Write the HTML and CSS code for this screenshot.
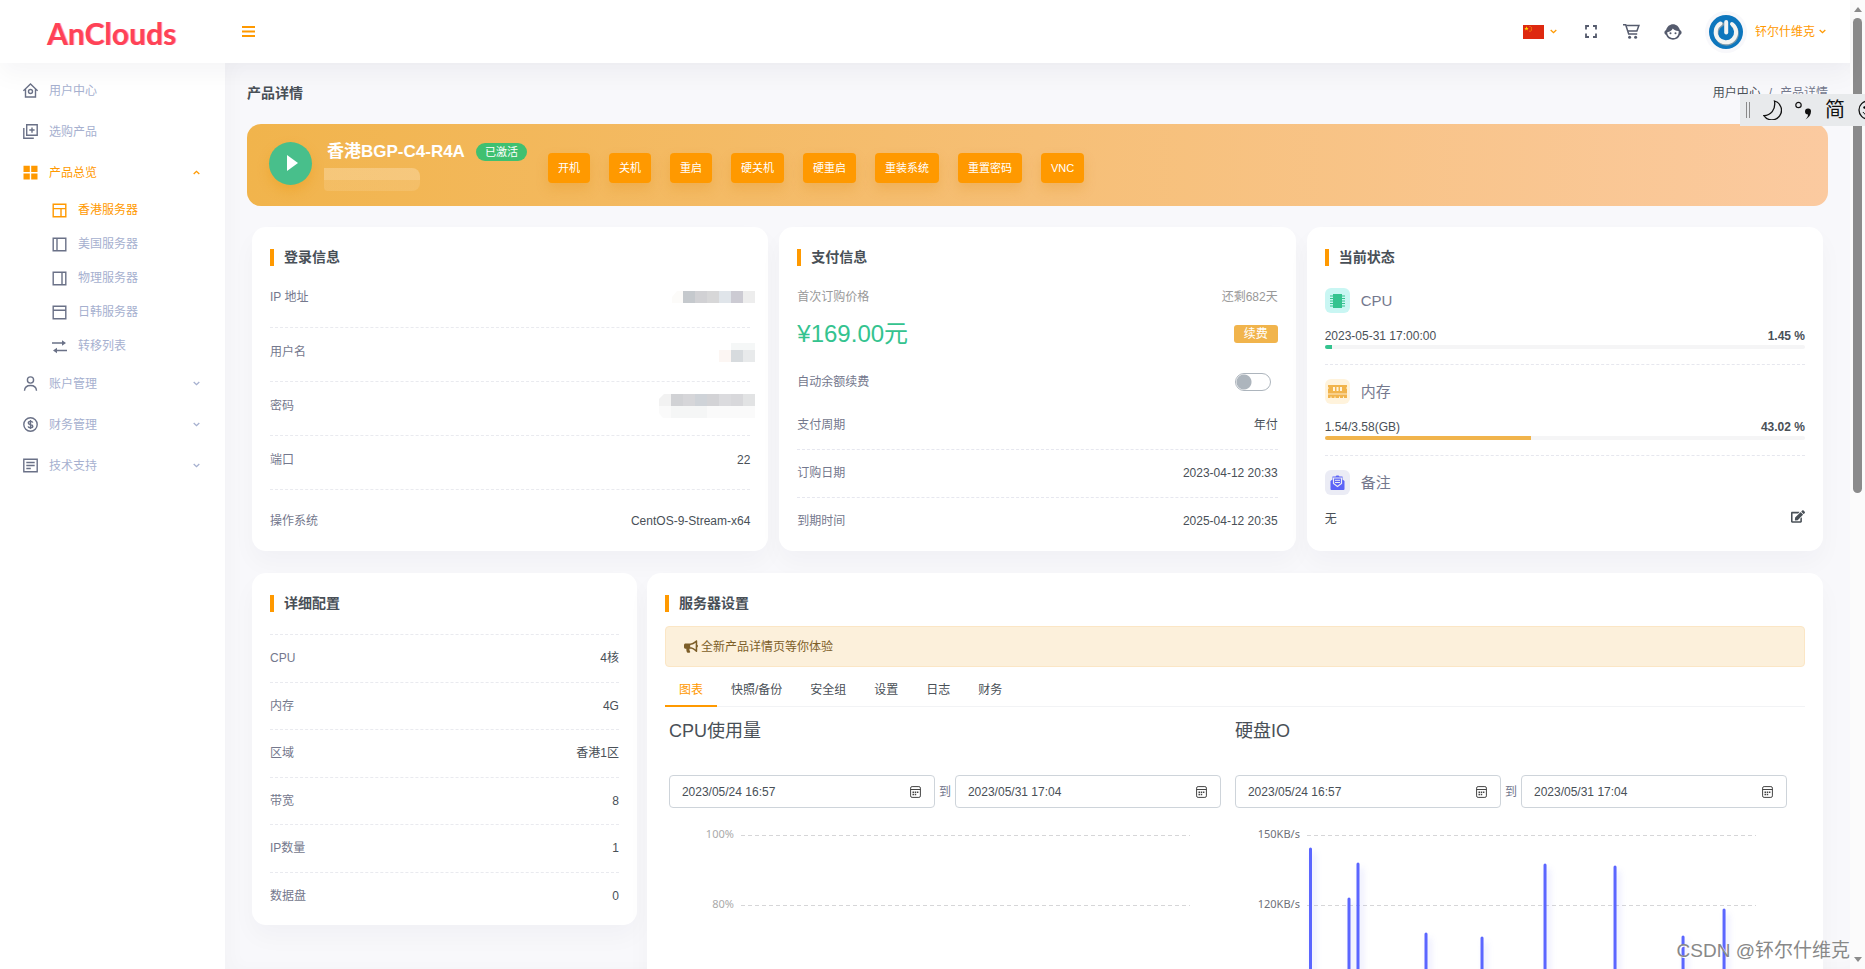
FILE: index.html
```html
<!DOCTYPE html>
<html lang="zh-CN">
<head>
<meta charset="utf-8">
<meta name="viewport" content="width=device-width, initial-scale=1">
<title>产品详情 - AnClouds</title>
<link rel="stylesheet" href="styles.css">
</head>
<body>
<div class="window">
<div class="app">
  <header class="topbar">
    <a class="logo" href="#">AnClouds</a>
    <button class="menu-toggle" type="button" aria-label="菜单"><svg width="13" height="11" viewBox="0 0 13 11"><path d="M0 0h13v2H0zM0 4.500h13v2H0zM0 9h13v2H0z" fill="currentColor"/></svg></button>
    <div class="topbar-tools">
      <button class="tool lang" type="button" aria-label="语言">
        <svg width="21" height="14" viewBox="0 0 21 14"><path fill="#de2910" d="M0 0h21v14H0z"/><path fill="#ffde00" d="M3.500 1.300l.6 1.600h1.600L4.400 4l.5 1.600-1.400-1-1.400 1L2.600 4 1.300 2.900h1.600z"/><g fill="#f5a012"><circle cx="7" cy="1.500" r=".6"/><circle cx="8.400" cy="2.900" r=".6"/><circle cx="8.400" cy="4.900" r=".6"/><circle cx="7" cy="6.200" r=".6"/></g></svg>
        <svg class="chev" width="7" height="5" viewBox="0 0 7 5"><path d="M.7 1l2.800 2.700L6.300 1"/></svg>
      </button>
      <button class="tool" type="button" aria-label="全屏"><svg width="12" height="13" viewBox="0 0 12 13"><path d="M1 4.500V1h3M8 1h3v3.500M11 8.500V12H8M4 12H1V8.500" fill="none" stroke="currentColor" stroke-width="1.800"/></svg></button>
      <button class="tool cart" type="button" aria-label="购物车"><svg width="17" height="17" viewBox="0 0 17 17"><path d="M0 1.800h2.700l3 9.200h8.500" fill="none" stroke="currentColor" stroke-width="1.500"/><path d="M3.300 2.500h12.600l-2 5.500H5" fill="none" stroke="currentColor" stroke-width="1.500"/><circle cx="6.600" cy="14.300" r="1.500" fill="currentColor"/><circle cx="12.600" cy="14.300" r="1.500" fill="currentColor"/></svg></button>
      <button class="tool face" type="button" aria-label="客服"><svg width="18" height="16" viewBox="0 0 18 16"><path d="M2.100 6C3 2.600 5.700.3 9 .3s6 2.300 6.900 5.700c1 .4 1.700 1.300 1.700 2.500s-.7 2.100-1.700 2.500C15 13.900 12.200 15.700 9 15.700S3 13.900 2.100 11C1.100 10.600.4 9.700.4 8.500S1.100 6.400 2.100 6z" fill="currentColor"/><path d="M3.200 8.300c2.600-.5 4.600-1.900 5.600-3.900 1.300 1.700 3.200 2.600 5.800 2.500.1 1 .1 2.200-.2 3-.8 2.500-2.800 4.200-5.400 4.200-3.100 0-5.800-2.500-5.800-5.800z" fill="#fff"/><circle cx="6.500" cy="9.200" r="1" fill="currentColor"/><circle cx="11.500" cy="9.200" r="1" fill="currentColor"/></svg></button>
      <button class="account" type="button">
        <span class="avatar"><svg width="34" height="34" viewBox="0 0 34 34"><circle cx="17" cy="17" r="17" fill="#0d76bd"/><path d="M12.200 8.300a10.200 10.200 0 1 0 11 1.400" fill="none" stroke="#7d99a9" stroke-width="4" stroke-linecap="round" transform="translate(1 1)"/><path d="M11.500 8.500a10.200 10.200 0 1 0 11.500.5" fill="none" stroke="#f3f4f2" stroke-width="4" stroke-linecap="round"/><path d="M17.200 7v10.500" stroke="#f3f4f2" stroke-width="4" stroke-linecap="round"/></svg></span>
        <span>钚尔什维克</span>
        <svg class="chev" width="7" height="5" viewBox="0 0 7 5"><path d="M.7 1l2.800 2.700L6.300 1"/></svg>
      </button>
    </div>
  </header>

  <div class="body">
    <nav class="sidebar" aria-label="主菜单">
      <a class="nav-item" href="#"><svg class="ico" viewBox="0 0 15 15"><path d="M2.500 6v8h10V6M.4 7.800L7.500 1l7.100 6.800"/><circle cx="7.500" cy="8.500" r="2"/></svg><span>用户中心</span></a>
      <a class="nav-item" href="#"><svg class="ico" viewBox="0 0 15 15"><path d="M3.700.8h10.500v10.500H3.700zM.8 4v10.200h10M9 3.400v5.300M6.300 6h5.300"/></svg><span>选购产品</span></a>
      <a class="nav-item active" href="#"><svg class="ico" viewBox="0 0 15 15"><path class="solid" d="M.5.800h6.300v6.200H.5zM8.200.800h6.300v6.200H8.200zM.5 8.400h6.300v6.200H.5zM8.200 8.400h6.300v6.200H8.200z"/></svg><span>产品总览</span><svg class="chev" width="7" height="5" viewBox="0 0 7 5"><path d="M.7 4l2.800-2.700L6.300 4"/></svg></a>
      <div class="subnav">
        <a class="nav-sub active" href="#"><svg class="ico" viewBox="0 0 15 15"><path d="M1.200 1.200h12.600v12.600H1.200zM1.200 5.600h12.600M9 5.600v8.200"/></svg><span>香港服务器</span></a>
        <a class="nav-sub" href="#"><svg class="ico" viewBox="0 0 15 15"><path d="M1.200 1.200h12.600v12.600H1.200zM5 1.200v12.600"/></svg><span>美国服务器</span></a>
        <a class="nav-sub" href="#"><svg class="ico" viewBox="0 0 15 15"><path d="M1.200 1.200h12.600v12.600H1.200zM10 1.200v12.600"/></svg><span>物理服务器</span></a>
        <a class="nav-sub" href="#"><svg class="ico" viewBox="0 0 15 15"><path d="M1.200 1.200h12.600v12.600H1.200zM1.200 5.200h12.600"/></svg><span>日韩服务器</span></a>
        <a class="nav-sub" href="#"><svg class="ico" viewBox="0 0 15 15"><path d="M0 4h11.500M15 11.500H3.500"/><path class="solid" d="M10 1.200l4 2.800-4 2.800zM5 8.700l-4 2.800 4 2.800z"/></svg><span>转移列表</span></a>
      </div>
      <a class="nav-item" href="#"><svg class="ico" viewBox="0 0 15 15"><circle cx="7.500" cy="4" r="3.100"/><path d="M1.500 14.800c.2-3.600 2.700-5.300 6-5.300s5.800 1.700 6 5.300"/></svg><span>账户管理</span><svg class="chev" width="7" height="5" viewBox="0 0 7 5"><path d="M.7 1l2.800 2.700L6.300 1"/></svg></a>
      <a class="nav-item" href="#"><svg class="ico" viewBox="0 0 15 15"><circle cx="7.500" cy="7.500" r="6.700"/><path d="M9.800 5.600c-.2-.8-1-1.200-2.300-1.200S5.300 5 5.300 5.900s.7 1.300 2.200 1.600 2.300.7 2.300 1.700-.9 1.500-2.300 1.500-2.200-.5-2.400-1.400M7.500 3v9"/></svg><span>财务管理</span><svg class="chev" width="7" height="5" viewBox="0 0 7 5"><path d="M.7 1l2.800 2.700L6.300 1"/></svg></a>
      <a class="nav-item" href="#"><svg class="ico" viewBox="0 0 15 15"><path d="M.8 1.300h13.400v12.400H.8zM3.300 4.500h8.400M3.300 7.500h8.400M3.300 10.500h4.500"/></svg><span>技术支持</span><svg class="chev" width="7" height="5" viewBox="0 0 7 5"><path d="M.7 1l2.800 2.700L6.300 1"/></svg></a>
    </nav>

    <main class="main">
      <div class="page-head">
        <h1 class="page-title">产品详情</h1>
        <nav class="crumbs" aria-label="位置"><a href="#">用户中心</a><span>/</span><span>产品详情</span></nav>
      </div>

      <section class="banner">
        <span class="play"><svg width="11" height="16" viewBox="0 0 11 16"><path d="M0 0l11 8-11 8z" fill="#fff"/></svg></span>
        <div class="product">
          <div class="product-name"><h2>香港BGP-C4-R4A</h2><span class="badge">已激活</span></div>
          <div class="product-mask"></div>
        </div>
        <div class="actions">
          <button class="btn" type="button">开机</button>
          <button class="btn" type="button">关机</button>
          <button class="btn" type="button">重启</button>
          <button class="btn" type="button">硬关机</button>
          <button class="btn" type="button">硬重启</button>
          <button class="btn" type="button">重装系统</button>
          <button class="btn" type="button">重置密码</button>
          <button class="btn" type="button">VNC</button>
        </div>
      </section>

      <div class="cards-top">
        <section class="card">
          <h3 class="card-title">登录信息</h3>
          <dl class="login">
            <div><dt>IP 地址</dt><dd class="masked"><svg width="83" height="12" viewBox="0 0 83 12"><path fill="#fcfbf9" d="M5 0h6v12H0V6z"/><path fill="#c5c9cd" d="M11 0h12v12H11z"/><path fill="#d1d1d4" d="M23 0h12v12H23z"/><path fill="#d7d7d8" d="M35 0h12v12H35z"/><path fill="#e0e5ea" d="M47 0h12v12H47z"/><path fill="#cccbd3" d="M59 0h12v12H59z"/><path fill="#ededed" d="M71 0h12v12H71z"/></svg></dd></div>
            <div><dt>用户名</dt><dd class="masked"><svg width="36" height="19" viewBox="0 0 36 19"><path fill="#f5f7f7" d="M12 0h24v7H12z"/><path fill="#fcf6f3" d="M0 7h12v12H0z"/><path fill="#d7dbde" d="M12 7h12v12H12z"/><path fill="#e8eaeb" d="M24 7h12v12H24z"/></svg></dd></div>
            <div><dt>密码</dt><dd class="masked"><svg width="96" height="24" viewBox="0 0 96 24"><path fill="#f2f2f2" d="M5 0h7v12H0V5z"/><path fill="#d1d2d5" d="M12 0h12v12H12z"/><path fill="#d6d6d9" d="M24 0h12v12H24z"/><path fill="#cfd3d8" d="M36 0h12v12H36z"/><path fill="#d3d3d6" d="M48 0h12v12H48z"/><path fill="#dbdbde" d="M60 0h12v12H60z"/><path fill="#d8d8db" d="M72 0h12v12H72z"/><path fill="#e2e3e4" d="M84 0h12v12H84z"/><path fill="#fafafa" d="M0 12h96v12H4l-4-5z"/><path fill="#f5f6f6" d="M12 12h36v12H12z"/></svg></dd></div>
            <div><dt>端口</dt><dd>22</dd></div>
            <div><dt>操作系统</dt><dd>CentOS-9-Stream-x64</dd></div>
          </dl>
        </section>

        <section class="card">
          <h3 class="card-title">支付信息</h3>
          <div class="line muted"><span>首次订购价格</span><span>还剩682天</span></div>
          <div class="line price-line"><strong class="price">¥169.00元</strong><button class="renew" type="button">续费</button></div>
          <div class="line auto-line"><label for="auto">自动余额续费</label><input class="switch" id="auto" type="checkbox"></div>
          <dl class="pay">
            <div><dt>支付周期</dt><dd>年付</dd></div>
            <div><dt>订购日期</dt><dd>2023-04-12 20:33</dd></div>
            <div><dt>到期时间</dt><dd>2025-04-12 20:35</dd></div>
          </dl>
        </section>

        <section class="card">
          <h3 class="card-title">当前状态</h3>
          <div class="stat">
            <div class="stat-head"><span class="stat-ico green"><svg width="15" height="16" viewBox="0 0 15 16"><path d="M3 1h9v14H3z" fill="#34c38f"/><path d="M0 3h15M0 5.500h15M0 8h15M0 10.500h15M0 13h15" stroke="#34c38f" stroke-width="1"/><path d="M3 1h9v14H3z" fill="#34c38f"/></svg></span>CPU</div>
            <div class="stat-row"><span>2023-05-31 17:00:00</span><b>1.45 %</b></div>
            <div class="bar"><div class="fill green-fill" style="width:1.45%"></div></div>
          </div>
          <div class="stat">
            <div class="stat-head"><span class="stat-ico amber"><svg width="19" height="13" viewBox="0 0 19 13"><path d="M0 0h19v2l-1 1 1 1v4H0V4l1-1-1-1z" fill="#f1b44c"/><path d="M0 8h19v2H0z" fill="#f8cf8a"/><path d="M0 10h19v3H0z" fill="#f1b44c"/><path d="M5 2h2v4H5zM8.500 2h2v4h-2zM12 2h2v4h-2zM2.500 11.500h1V13h-1zM6.500 11.500h1V13h-1zM11 11.500h1V13h-1zM15 11.500h1V13h-1z" fill="#fff3dc"/></svg></span>内存</div>
            <div class="stat-row"><span>1.54/3.58(GB)</span><b>43.02 %</b></div>
            <div class="bar"><div class="fill amber-fill" style="width:43.02%"></div></div>
          </div>
          <div class="stat">
            <div class="stat-head"><span class="stat-ico violet"><svg width="15" height="15" viewBox="0 0 15 15"><path d="M2.500 1.500h3l1-1h2l1 1h3v3L14.500 6v8a1 1 0 0 1-1 1h-12a1 1 0 0 1-1-1V6l2-1.500z" fill="#5b63f7"/><path d="M3.500 3h8v5.500l-4 3-4-3z" fill="#5b63f7" stroke="#ebecf5" stroke-width="1.200"/><path d="M5 5.300h5M5 7.500h5" stroke="#ebecf5"/></svg></span>备注</div>
            <div class="stat-row note"><span>无</span><button class="edit" type="button" aria-label="编辑备注"><svg width="14" height="13" viewBox="0 0 576 512"><path fill="currentColor" d="M402.600 83.200l90.200 90.200c3.800 3.800 3.800 10 0 13.800L274.400 405.600l-92.800 10.300c-12.400 1.400-22.900-9.100-21.500-21.500l10.300-92.800L388.800 83.200c3.800-3.800 10-3.800 13.800 0zm162-22.900l-48.800-48.800c-15.200-15.200-39.900-15.200-55.200 0l-35.400 35.400c-3.800 3.800-3.800 10 0 13.800l90.200 90.200c3.800 3.800 10 3.800 13.800 0l35.400-35.400c15.200-15.300 15.200-40 0-55.200zM384 346.200V448H64V128h229.800c3.200 0 6.200-1.300 8.500-3.500l40-40c7.600-7.600 2.200-20.500-8.500-20.500H48C21.500 64 0 85.500 0 112v352c0 26.500 21.500 48 48 48h352c26.500 0 48-21.500 48-48V306.200c0-10.700-12.900-16-20.500-8.500l-40 40c-2.200 2.300-3.500 5.300-3.500 8.500z"/></svg></button></div>
          </div>
        </section>
      </div>

      <div class="cards-bottom">
        <section class="card specs-card">
          <h3 class="card-title">详细配置</h3>
          <dl class="specs">
            <div><dt>CPU</dt><dd>4核</dd></div>
            <div><dt>内存</dt><dd>4G</dd></div>
            <div><dt>区域</dt><dd>香港1区</dd></div>
            <div><dt>带宽</dt><dd>8</dd></div>
            <div><dt>IP数量</dt><dd>1</dd></div>
            <div><dt>数据盘</dt><dd>0</dd></div>
          </dl>
        </section>

        <section class="card settings-card">
          <h3 class="card-title tight">服务器设置</h3>
          <div class="notice"><svg width="14" height="13" viewBox="0 0 576 512"><path fill="currentColor" d="M576 240c0-23.630-12.950-44.040-32-55.120V32.010C544 23.260 537.020 0 512 0c-7.120 0-14.190 2.380-19.980 7.020l-85.030 68.030C364.280 109.190 310.660 128 256 128H64c-35.350 0-64 28.650-64 64v96c0 35.350 28.650 64 64 64h33.700c-1.390 10.480-2.180 21.140-2.180 32 0 39.770 9.260 77.350 25.560 110.940 5.190 10.690 16.520 17.060 28.400 17.060h74.280c26.050 0 41.690-29.840 25.900-50.560-16.400-21.520-26.150-48.360-26.150-77.440 0-11.110 1.620-21.790 4.410-32H256c54.660 0 108.280 18.810 150.980 52.950l85.030 68.030a32.023 32.023 0 0 0 19.980 7.020c24.920 0 32-22.780 32-32V295.130C563.050 284.040 576 263.630 576 240zm-96 141.420l-33.050-26.440C392.950 311.780 325.120 288 256 288v-96c69.120 0 136.950-23.780 190.950-66.980L480 98.580v282.840z"/></svg><span>全新产品详情页等你体验</span></div>
          <nav class="tabs" aria-label="服务器设置">
            <a class="tab on" href="#">图表</a><a class="tab" href="#">快照/备份</a><a class="tab" href="#">安全组</a><a class="tab" href="#">设置</a><a class="tab" href="#">日志</a><a class="tab" href="#">财务</a>
          </nav>
          <div class="charts">
            <section>
              <h4 class="chart-title">CPU使用量</h4>
              <div class="range">
                <div class="date"><input type="text" value="2023/05/24 16:57" aria-label="CPU使用量开始时间"><svg width="11" height="12" viewBox="0 0 11 12"><rect x=".6" y=".6" width="9.800" height="10.800" rx="1.500"/><path d="M.6 3.500h9.800"/><path class="days" d="M2.500 6.300h6M2.500 8.500h4"/></svg></div>
                <span>到</span>
                <div class="date"><input type="text" value="2023/05/31 17:04" aria-label="CPU使用量结束时间"><svg width="11" height="12" viewBox="0 0 11 12"><rect x=".6" y=".6" width="9.800" height="10.800" rx="1.500"/><path d="M.6 3.500h9.800"/><path class="days" d="M2.500 6.300h6M2.500 8.500h4"/></svg></div>
              </div>
              <div class="plot light">
                <div class="tick"><span>100%</span></div>
                <div class="tick"><span>80%</span></div>
              </div>
            </section>
            <section>
              <h4 class="chart-title">硬盘IO</h4>
              <div class="range">
                <div class="date"><input type="text" value="2023/05/24 16:57" aria-label="硬盘IO开始时间"><svg width="11" height="12" viewBox="0 0 11 12"><rect x=".6" y=".6" width="9.800" height="10.800" rx="1.500"/><path d="M.6 3.500h9.800"/><path class="days" d="M2.500 6.300h6M2.500 8.500h4"/></svg></div>
                <span>到</span>
                <div class="date"><input type="text" value="2023/05/31 17:04" aria-label="硬盘IO结束时间"><svg width="11" height="12" viewBox="0 0 11 12"><rect x=".6" y=".6" width="9.800" height="10.800" rx="1.500"/><path d="M.6 3.500h9.800"/><path class="days" d="M2.500 6.300h6M2.500 8.500h4"/></svg></div>
              </div>
              <div class="plot">
                <div class="tick"><span>150KB/s</span></div>
                <div class="tick"><span>120KB/s</span></div>
                <svg class="series" viewBox="0 0 449 350" preserveAspectRatio="none"><path d="M3.500 350V14M42 350V64M51 350V29M119 350V99M175 350V103M238 350V30M308 350V32M376 350V102M417 350V75"/></svg>
              </div>
            </section>
          </div>
        </section>
      </div>
    </main>
  </div>
</div>

<div class="scrollbar" aria-hidden="true"><i class="up"></i><i class="thumb"></i><i class="down"></i></div>

<div class="ime">
  <svg width="4" height="16" viewBox="0 0 4 16"><path d="M.5 0v16M3.500 0v16" stroke="#8a8a8a" fill="none"/></svg>
  <svg width="19" height="20" viewBox="0 0 19 20"><path d="M11.500 1a9.600 9.600 0 1 1-10.600 14.600C7.500 15.500 13 10 11.500 1z" fill="none" stroke="#111" stroke-width="1.300"/></svg>
  <svg width="17" height="20" viewBox="0 0 17 20"><circle cx="3.500" cy="5" r="2.700" fill="none" stroke="#111" stroke-width="1.200"/><path d="M13 8.500a2.900 2.900 0 0 1 3 3c0 3-2 6-5.500 8 1.500-1.600 2.500-3 2.500-5a2.900 2.900 0 0 1 0-6z" fill="#111"/></svg>
  <span>简</span>
  <svg width="20" height="20" viewBox="0 0 20 20"><circle cx="10" cy="10" r="9" fill="none" stroke="#111" stroke-width="1.300"/><circle cx="6.500" cy="7.500" r="1.200"/><circle cx="13.500" cy="7.500" r="1.200"/><path d="M5 12c2 4 8 4 10 0" fill="none" stroke="#111"/></svg>
</div>
<div class="watermark">CSDN @钚尔什维克</div>
</div>
</body>
</html>
```
FILE: styles.css
```css
* { box-sizing: border-box; }

body {
  margin: 0;
  background: #f8f8fb;
  color: #495057;
  font: 12px/18px "Liberation Sans", "Noto Sans CJK SC", sans-serif;
}

h1, h2, h3, h4, dl, dd { margin: 0; }
a { color: inherit; text-decoration: none; }
button { border: 0; padding: 0; background: none; color: inherit; font: inherit; cursor: pointer; }
svg { display: block; flex: none; }

.window { position: relative; display: flex; height: 100vh; overflow: hidden; }
.app { flex: 1; min-width: 0; display: flex; flex-direction: column; }

/* Top bar */
.topbar {
  position: relative;
  z-index: 2;
  display: flex;
  flex: none;
  align-items: center;
  height: 63px;
  padding-right: 24px;
  background: #fff;
  box-shadow: 0 12px 24px rgba(18, 38, 63, .04);
}
.logo {
  width: 242px;
  padding: 2px 0 0 47px;
  color: #ff4257;
  font: 700 30px/34px Lato, sans-serif;
  text-shadow: 1px 0 #fca5ae;
}
.menu-toggle { color: #ff9900; }
.topbar-tools { display: flex; align-items: center; margin-left: auto; color: #555b6d; }
.tool { margin-right: 26px; }
.tool.cart { margin-right: 24px; }
.tool.face { margin-right: 23px; }
.lang { display: flex; align-items: center; gap: 6px; margin-right: 28px; color: #ff9900; }
.chev path { fill: none; stroke: currentColor; stroke-width: 1.300; }
.account { display: flex; align-items: center; color: #ff9900; }
.avatar { margin-right: 8px; padding: 4px; border-radius: 50%; background: #f8f8fb; }
.account .chev { margin-left: 4px; }

/* Columns */
.body { display: flex; flex: 1; min-height: 0; }
.sidebar { flex: none; width: 225px; padding-top: 7px; background: #fff; color: #a6b0cf; }
.nav-item { display: flex; align-items: center; height: 41px; padding: 0 25px 0 23px; }
.nav-sub { display: flex; align-items: center; height: 34px; padding-left: 52px; }
.ico { width: 15px; height: 15px; margin-right: 11px; fill: none; stroke: #6a7187; stroke-width: 1.400; }
.ico .solid { fill: #6a7187; stroke: none; }
.nav-item .chev { margin-left: auto; }
.active { color: #ff9900; }
.active .ico { stroke: #ff9900; }
.active .ico .solid { fill: #ff9900; }

.main { flex: 1; min-width: 0; padding: 21px 22px 0; overflow: hidden; background: #f8f8fb; box-shadow: inset 8px 0 16px rgba(18, 38, 63, .02); }
.page-head { display: flex; align-items: center; justify-content: space-between; }
.page-title { font-size: 14px; line-height: 18px; }
.crumbs { display: flex; gap: 8px; color: #74788d; }
.crumbs a { color: #495057; }

/* Product banner */
.banner {
  display: flex;
  align-items: center;
  height: 82px;
  margin-top: 22px;
  padding: 0 22px;
  border-radius: 14px;
  background: linear-gradient(to right, #f1b44c, #fbcaa0);
}
.play {
  display: flex;
  align-items: center;
  justify-content: center;
  width: 43px;
  height: 43px;
  margin: 0 12px 4px 0;
  padding-left: 3px;
  border-radius: 50%;
  background: #48bf8b;
  box-shadow: 0 6px 12px rgba(236, 153, 20, .4);
}
.product { width: 224px; }
.product-name { display: flex; align-items: center; gap: 11px; padding-left: 3px; }
.product-name h2 { color: #fff; font-size: 17px; line-height: 26px; white-space: nowrap; }
.badge { padding: 0 9px; border-radius: 9px; background: #40c070; color: #fff; font-size: 11px; line-height: 18px; white-space: nowrap; }
.product-mask {
  width: 96px;
  height: 23px;
  margin-top: 3px;
  border-radius: 0 8px 8px 4px;
  background: linear-gradient(to bottom, rgba(255, 240, 220, .3) 12px, rgba(255, 240, 220, .14) 12px);
}
.actions { display: flex; flex-wrap: wrap; gap: 19px; padding-top: 6px; }
.btn {
  height: 30px;
  padding: 0 10px;
  border-radius: 4px;
  background: #ff9900;
  box-shadow: 0 6px 12px rgba(226, 140, 20, .25);
  color: #fff;
  font-size: 11px;
}

/* Cards */
.cards-top { display: grid; grid-template-columns: repeat(3, 1fr); gap: 11px; margin: 21px 5px 22px; }
.cards-bottom { display: flex; align-items: flex-start; gap: 10px; margin: 0 5px; }
.card { padding: 22px 18px 13px; border-radius: 14px; background: #fff; box-shadow: 0 12px 24px rgba(18, 38, 63, .03); }
.specs-card { flex: none; width: 24.500%; padding-bottom: 6px; }
.settings-card { flex: 1; min-width: 0; }
.card-title { margin-bottom: 22px; padding-left: 10px; border-left: 4px solid #ff9900; font-size: 14px; line-height: 17px; }
.card-title.tight { margin-bottom: 14px; }

dl > div { display: flex; justify-content: space-between; }
dt, .auto-line { color: #74788d; }
.login > div { height: 54px; padding-top: 15px; border-bottom: 1px dashed #e9eaef; }
.login > div:first-child { height: 40px; padding-top: 0; }
.login > div:last-child { height: 48px; padding-top: 22px; border: 0; }
.masked { display: flex; align-items: center; height: 18px; margin-right: -5px; }

.line { display: flex; align-items: center; justify-content: space-between; }
.muted { color: #999; }
.price-line { height: 30px; margin: 13px 0 24px; }
.price { color: #34c38f; font-size: 24px; font-weight: 400; }
.renew { padding: 0 10px; border-radius: 3px; background: #f1b44c; color: #fff; }
.switch {
  appearance: none;
  width: 36px;
  height: 18px;
  margin: 0 7px 0 0;
  border: 1px solid #adb5bd;
  border-radius: 9px;
  background: radial-gradient(circle at 8px 8px, #adb5bd 7px, transparent 8px);
}
.pay { margin-top: 11px; }
.pay > div { padding: 14px 0 15px; border-bottom: 1px dashed #e6e7ef; }
.pay > div:last-child { padding-bottom: 0; border: 0; }

.stat { margin-bottom: 14px; padding-bottom: 15px; border-bottom: 1px dashed #e6e7ee; }
.stat:last-child { margin: 0; padding: 0; border: 0; }
.stat-head { display: flex; align-items: center; gap: 11px; height: 25px; color: #74788d; font-size: 15px; }
.stat-ico { display: flex; align-items: center; justify-content: center; width: 25px; height: 25px; border-radius: 6px; }
.green { background: #c9f6f3; }
.amber { background: #fff3dc; }
.violet { background: #ebecf5; }
.stat-row { display: flex; align-items: center; justify-content: space-between; margin-top: 14px; }
.stat-row.note { align-items: flex-start; margin-top: 15px; }
.bar { height: 4px; border-radius: 2px; overflow: hidden; background: #f5f5f6; }
.fill { height: 100%; }
.green-fill { background: #34c38f; }
.amber-fill { background: #f1b44c; }

.specs { display: grid; grid-auto-rows: 1fr; min-height: 285px; }
.specs > div { align-items: center; border-top: 1px dashed #e9eaef; }

/* Server settings */
.notice { display: flex; align-items: center; gap: 3px; height: 41px; padding: 0 18px; border: 1px solid #fbe6c5; border-radius: 4px; background: #fcf0db; color: #7d5e28; }
.tabs { display: flex; border-bottom: 1px solid #f2f3f5; }
.tab { margin-bottom: -1px; padding: 14px 14px 6px; border-bottom: 2px solid transparent; }
.tab.on { border-color: #ff9900; color: #ff9900; }
.charts { display: grid; grid-template-columns: 1fr 1fr; gap: 14px; padding: 12px 18px 0 4px; }
.chart-title { margin-bottom: 32px; font-size: 18px; font-weight: 400; line-height: 24px; }
.range { display: flex; align-items: center; gap: 4px; color: #74788d; }
.date { display: flex; flex: 1; align-items: center; min-width: 0; height: 33px; padding: 0 13px 0 12px; border: 1px solid #ced4da; border-radius: 4px; background: #fff; }
.date input { flex: 1; min-width: 0; padding: 0; border: 0; outline: 0; background: none; color: #495057; font: inherit; }
.date svg { fill: none; stroke: #444; stroke-width: 1; }
.date .days { stroke-width: 1.500; stroke-dasharray: 1.500 .7; }
.plot { position: relative; height: 350px; margin: 27px 31px 0 0; color: #6e7079; }
.plot.light { color: #aaa; }
.tick { display: flex; align-items: flex-start; gap: 7px; height: 70px; }
.tick span { width: 65px; margin-top: -10px; font: 11px/18px "Noto Sans", sans-serif; text-align: right; }
.tick::after { flex: 1; height: 1px; background: repeating-linear-gradient(to right, #d6d6d8 0 4px, transparent 4px 7px); content: ""; }
.series { position: absolute; top: 0; left: 72px; width: calc(100% - 72px); height: 350px; filter: drop-shadow(3px 5px 3px rgba(91, 99, 247, .2)); }
.series path { fill: none; stroke: #5b66ff; stroke-width: 3; stroke-linecap: round; vector-effect: non-scaling-stroke; }

/* Scroll bar, input-method bar and watermark */
.scrollbar { display: flex; flex: none; flex-direction: column; align-items: center; width: 15px; padding: 7px 0; background: #fbfbfb; }
.up, .down { border: 4px solid transparent; }
.up { border-top-width: 0; border-bottom: 5px solid #8b8b8b; }
.down { margin-top: auto; border-bottom-width: 0; border-top: 5px solid #8b8b8b; }
.thumb { width: 9px; height: 49vh; margin-top: 6px; border-radius: 5px; background: #8b8b8b; }
.ime {
  position: absolute;
  z-index: 3;
  top: 94px;
  right: 0;
  display: flex;
  align-items: center;
  gap: 13px;
  width: 125px;
  height: 32px;
  padding-left: 6px;
  overflow: hidden;
  background: #e8eaec;
  color: #111;
  font-size: 20px;
  line-height: 32px;
}
.watermark {
  position: absolute;
  z-index: 3;
  right: 15px;
  bottom: 4px;
  color: #888;
  font-size: 19px;
  line-height: 28px;
  text-shadow: 1px 1px #fff;
}
```
